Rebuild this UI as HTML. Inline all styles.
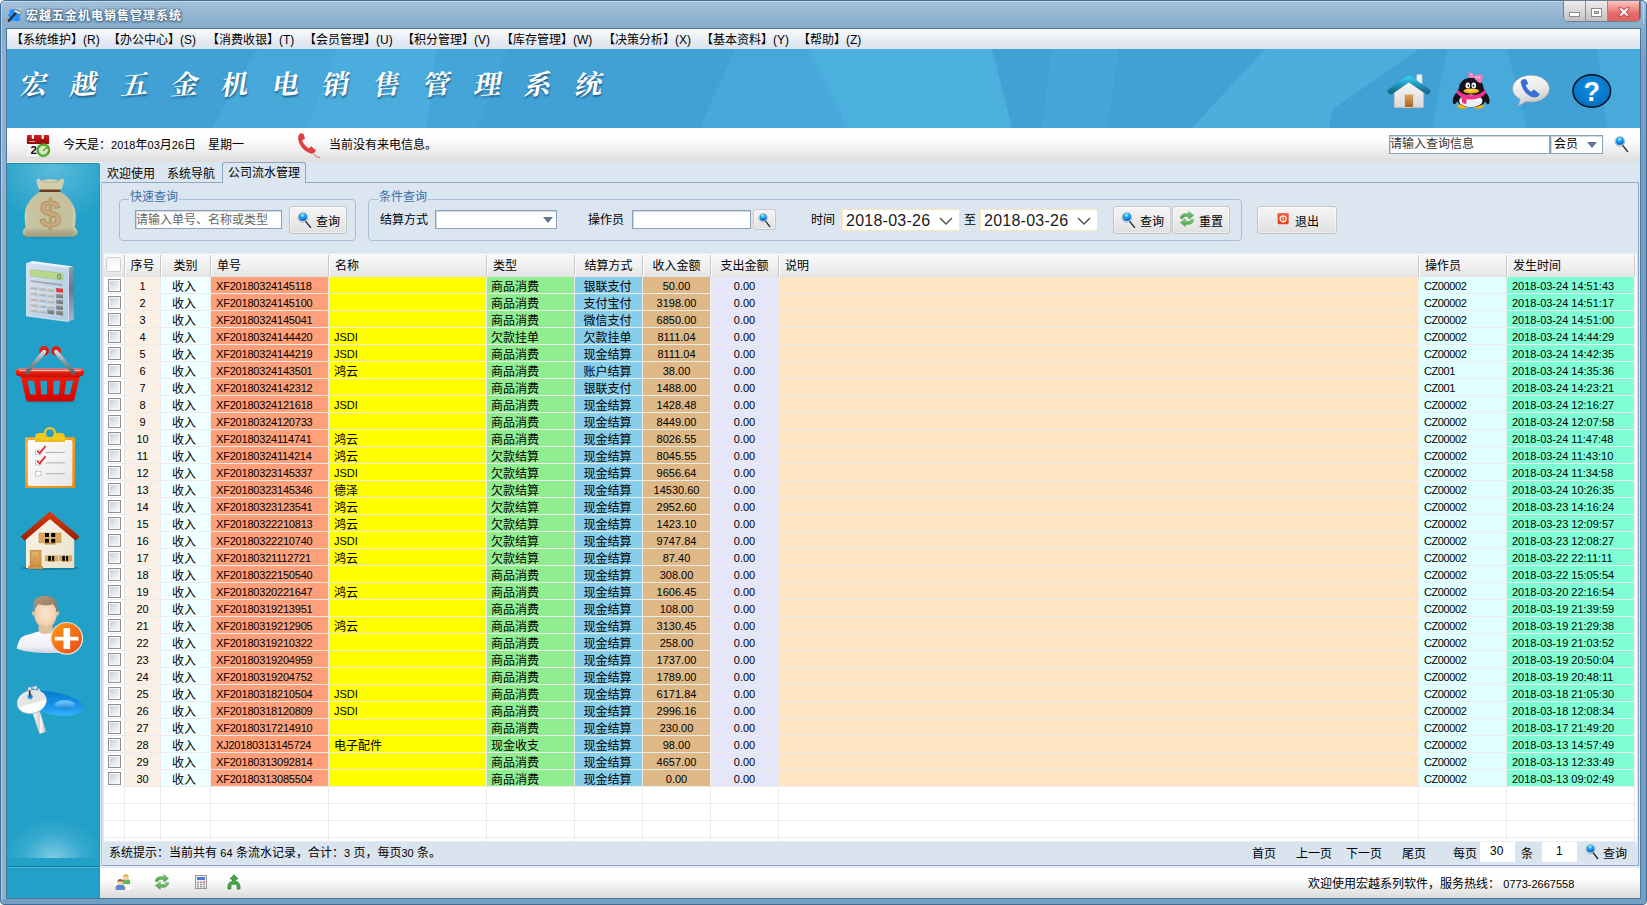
<!DOCTYPE html>
<html lang="zh-CN">
<head>
<meta charset="utf-8">
<title>宏越五金机电销售管理系统</title>
<style>
html,body{margin:0;padding:0}
body{width:1647px;height:905px;overflow:hidden;background:#fff;font-family:"Liberation Sans","Noto Sans CJK SC",sans-serif;font-size:12px;color:#000;line-height:1}
#win{position:absolute;left:0;top:0;width:1647px;height:905px;overflow:hidden}
.a{position:absolute}
i{font-style:normal}
b{font-weight:normal}
/* window frame */
#frame{left:0;top:0;width:1645px;height:903px;border:1px solid #3f6c95;border-radius:5px 5px 4px 4px;background:linear-gradient(#a4c1da 0,#9cbbd6 8px,#8bb0cd 20px,#86adcb 29px,#8cb2cf 60px,#8cb2cf 100%)}
#frame2{left:1px;top:1px;width:1643px;height:901px;border:1px solid rgba(255,255,255,.4);border-radius:4px 4px 3px 3px;box-sizing:border-box}
#clientb{left:6px;top:28px;width:1635px;height:871px;background:#4b7699}
#client{left:7px;top:29px;width:1633px;height:869px;background:#dce6f0;overflow:hidden}
#title{left:26px;top:10px;font-size:12px;font-weight:bold;color:#fff;text-shadow:0 0 3px #3d6180,0 1px 2px #3d6180,1px 0 2px #3d6180;white-space:nowrap;letter-spacing:1px}
/* caption buttons */
#capb{left:1563px;top:0;width:78px;height:22px;border:1px solid #6f7f90;border-radius:0 0 5px 5px;box-sizing:border-box;overflow:hidden;background:#c9c9c9}
#capb span{position:absolute;top:0;height:21px;box-sizing:border-box}
/* menu */
#menu{left:0;top:0;width:1633px;height:20px;background:linear-gradient(#f7f9fc 0,#eef2f7 35%,#e2e8f1 70%,#dbe3ee 100%)}
#menu span{position:absolute;top:5px;white-space:nowrap;font-size:12px}
/* banner */
#banner{left:0;top:20px;width:1633px;height:79px;background:#41a1d5;overflow:hidden}
#btitle span{position:absolute;top:0;width:50px;text-align:center;font-family:"Liberation Serif","Noto Serif CJK SC",serif;font-size:27px;font-weight:700;color:#fff;text-shadow:1px 2px 2px rgba(20,60,100,.7);transform:skewX(-14deg) rotate(-5deg)}
/* toolbar */
#tbar{left:0;top:99px;width:1633px;height:34px;background:linear-gradient(#fff 0,#fdfdfd 30%,#efefef 65%,#dedede 100%)}
.t12{font-size:12px;white-space:nowrap}
/* sidebar */
#side{left:0;top:134px;width:93px;height:735px;background:#22a0c8;overflow:hidden;border-radius:0 3px 0 0;box-shadow:inset -1px 0 0 #1b93ba}
/* tabs */
#tabs{left:93px;top:133px;width:1540px;height:20px}
#panel{left:94px;top:153px;width:1538px;height:684px;border:1px solid #8ea8c0;border-left-color:#bccbdb;box-sizing:border-box;background:#dce6f0}
.fs{border:1px solid #a9bfd6;border-radius:4px;box-sizing:border-box}
.fsl{color:#3a6fa8;background:#dce6f0;padding:0 1px;font-size:12px;white-space:nowrap}
.inp{background:#fff;border:1px solid #8aa1b8;box-sizing:border-box;box-shadow:inset 1px 1px 0 #cfd8e2}
.btn{border:1px solid #c3c5c8;border-radius:3px;box-sizing:border-box;background:linear-gradient(#f4f4f4 0,#ececec 50%,#e0e0e0 100%);box-shadow:inset 0 0 0 1px rgba(255,255,255,.45)}
.btn span{position:absolute;white-space:nowrap;font-size:12px}
/* grid */
#grid{left:103px;top:253px;width:1533px;height:589px;background:#fff;overflow:hidden}
#ghead{left:0;top:0;width:1533px;height:24px;background:linear-gradient(#f9f9f9 0,#f1f1f1 50%,#e4e4e4 100%);border-top:1px solid #e9edf2;box-sizing:border-box}
#ghead span{position:absolute;top:1px;height:22px;border-right:1px solid #c9c9c9;box-shadow:1px 0 0 #fdfdfd;box-sizing:border-box;line-height:23px;font-size:12px;white-space:nowrap}
#gbody{left:1px;top:24px;width:1532px}
.r{position:relative;height:17px;width:1532px}
.r i{position:absolute;top:0;height:17px;box-sizing:border-box;padding-top:1px;border-right:1px solid #ececec;border-bottom:1px solid #ececec;font-size:11px;line-height:17px;white-space:nowrap;overflow:hidden}
.c0{left:0;width:20px;background:#fff}
.c1{left:20px;width:36px;background:#faf0e6;text-align:center}
.c2{left:56px;width:50px;background:#f0ffff;text-align:center;font-size:12px !important;padding-right:3px;padding-top:2px !important}
.c3{left:106px;width:118px;background:#ffa07a;padding-left:5px;letter-spacing:-.2px}
.c4{left:224px;width:158px;background:#ffff00;padding-left:5px;font-size:12px !important;padding-top:2px !important}
.c5{left:382px;width:88px;background:#90ee90;padding-left:4px;font-size:12px !important;padding-top:2px !important}
.c6{left:470px;width:68px;background:#87ceeb;text-align:center;font-size:12px !important;padding-right:2px;padding-top:2px !important}
.c7{left:538px;width:68px;background:#deb887;text-align:center}
.c8{left:606px;width:68px;background:#e6e6fa;text-align:center}
.c9{left:674px;width:640px;background:#ffe4c4}
.c10{left:1314px;width:88px;background:#e0ffff;padding-left:5px;letter-spacing:-.4px}
.c11{left:1402px;width:128px;background:#7fffd4;padding-left:5px}
.ck{position:absolute;left:3px;top:2px;width:11px;height:11px;border:1px solid #8e8f8f;background:linear-gradient(135deg,#c6cad1 0,#e6e8eb 55%,#fbfbfb 100%);box-shadow:inset 0 0 0 1px #f6f6f6}
.c0{border-right:1px solid #e4e4e4 !important;border-bottom:1px solid #ececec !important}
.n{font-size:11px}
.c4.l{font-size:11px !important;padding-top:1px !important}
</style>
</head>
<body>
<div id="win">
<svg class="a" width="0" height="0" style="left:0;top:0"><defs>
<radialGradient id="mg" cx=".45" cy=".25" r=".75"><stop offset="0" stop-color="#b9f6ff"/><stop offset=".35" stop-color="#27b4f4"/><stop offset=".8" stop-color="#0a6fdc"/><stop offset="1" stop-color="#0a5cc0"/></radialGradient>
<linearGradient id="gr" x1="0" y1="0" x2="0" y2="1"><stop offset="0" stop-color="#8fd08a"/><stop offset="1" stop-color="#3f9a3f"/></linearGradient>
<g id="magi"><circle cx="5.900" cy="5.500" r="4.800" fill="#eef2f5" stroke="#8b9aa6" stroke-width=".8"/><circle cx="5.900" cy="5" r="4" fill="url(#mg)"/><path d="M8.900 9.600L13.500 15.400" stroke="#1c262d" stroke-width="1.400" stroke-linecap="round"/></g>
<g id="refi"><path d="M1.200 7.200C1.600 4 4.300 2.300 7.600 2.600L9.700 3V.6L14.600 4.400 9.700 8.200V5.800L7.400 5.500C5.600 5.400 4.300 6.200 3.900 7.700z" fill="url(#gr)" stroke="#4b9a4b" stroke-width=".5"/><path d="M14.800 8.800c-.4 3.200-3.100 4.900-6.400 4.600L6.300 13v2.400L1.400 11.600 6.300 7.800v2.400l2.300.3c1.800.1 3.100-.7 3.500-2.200z" fill="url(#gr)" stroke="#4b9a4b" stroke-width=".5"/></g>
</defs></svg>
<div id="frame" class="a"></div>
<div id="frame2" class="a"></div>
<div class="a" style="left:2px;top:899px;width:1643px;height:5px;background:#729fc3;border-radius:0 0 3px 3px"></div>
<div class="a" style="left:1641px;top:24px;width:5px;height:879px;background:linear-gradient(#86aecd 0,#759fc4 40px,#729fc3 100%);border-radius:0 0 3px 0"></div>
<svg class="a" style="left:7px;top:7px" width="16" height="16" viewBox="0 0 16 16"><path d="M2.500 3.500l2.500-1.500 1.500 1 3.500-.5 3 2 .5 3.500-1 2 1 3-3.500 1.500-2.500-1-3 .5-1.500-3-2-2.500 1.500-2z" fill="#1e90ff"/><path d="M1.800 13.800L8.800 6" stroke="#2b2b2b" stroke-width="2.300" stroke-linecap="round"/><path d="M8 2.200l6.300 3.400-1.300 2.400-6.300-3.400z" fill="#e8e8e8" stroke="#555" stroke-width=".6"/><path d="M12.600 1.200l1.200 1.800M10.500.8l.5 1.500" stroke="#eee" stroke-width=".7"/></svg>
<div id="title" class="a">宏越五金机电销售管理系统</div>
<div id="capb" class="a">
<span style="left:0;width:22px;background:linear-gradient(#ededed 0,#d9d9d9 45%,#bdbdbd 100%);border-right:1px solid #8a8f96"></span>
<span style="left:22px;width:22px;background:linear-gradient(#ededed 0,#d9d9d9 45%,#bdbdbd 100%);border-right:1px solid #8a8f96"></span>
<span style="left:44px;width:32px;background:linear-gradient(#fbc6c2 0,#ee8a87 40%,#e66a67 60%,#df615e 100%);border-right:1px solid #b4403e"></span>
<svg class="a" style="left:0;top:1px" width="77" height="20" viewBox="0 0 77 20"><rect x="5.500" y="10.500" width="10" height="4" fill="#fff" stroke="#8b8b8b"/><rect x="27.500" y="6.500" width="10" height="8" fill="#fff" stroke="#8b8b8b"/><rect x="30.500" y="9.500" width="4" height="2" fill="#c8c8c8" stroke="#8b8b8b"/><path d="M54.300 5.900h3.800l1.900 2.300 1.900-2.300h3.800l-3.800 4.100 3.800 4.100h-3.800l-1.900-2.300-1.900 2.300h-3.800l3.800-4.100z" fill="#fff" stroke="#a8423f" stroke-width=".9"/></svg>
</div>
<div id="clientb" class="a"></div>
<div id="client" class="a">
<div id="menu" class="a">
<span style="left:4px">【系统维护】(R)</span>
<span style="left:101px">【办公中心】(S)</span>
<span style="left:200px">【消费收银】(T)</span>
<span style="left:297px">【会员管理】(U)</span>
<span style="left:395px">【积分管理】(V)</span>
<span style="left:494px">【库存管理】(W)</span>
<span style="left:596px">【决策分析】(X)</span>
<span style="left:694px">【基本资料】(Y)</span>
<span style="left:791px">【帮助】(Z)</span>
</div>
<div id="banner" class="a">
<svg class="a" style="left:0;top:0" width="1633" height="79" viewBox="0 0 1633 79">
<polygon points="250,0 330,0 300,79 205,79" fill="#47a8da"/>
<polygon points="330,0 430,0 420,79 300,79" fill="#4aaddd"/>
<polygon points="430,0 500,0 470,79 420,79" fill="#44a5d8"/>
<polygon points="728,0 800,0 840,79 693,79" fill="#47a9db"/>
<polygon points="800,0 985,0 1005,79 840,79" fill="#4cb0df"/>
<polygon points="1045,0 1112,0 1100,79 1035,79" fill="#45a6d9"/>
<polygon points="1258,0 1412,0 1326,60 1322,79 1185,79" fill="#4baedd"/>
<polygon points="1440,0 1500,0 1520,79 1425,79" fill="#48aadb"/>
<polygon points="1590,0 1633,0 1633,79 1600,79" fill="#48aadb"/>
</svg>
<div id="btitle" class="a" style="left:2px;top:23px">
<span style="left:0">宏</span><span style="left:50px">越</span><span style="left:101px">五</span><span style="left:151px">金</span><span style="left:201px">机</span><span style="left:252px">电</span><span style="left:302px">销</span><span style="left:353px">售</span><span style="left:403px">管</span><span style="left:454px">理</span><span style="left:504px">系</span><span style="left:555px">统</span>
</div>
<svg class="a" style="left:1379px;top:21px" width="48" height="42" viewBox="0 0 48 42">
<defs>
<linearGradient id="hr" x1="0" y1="0" x2="0" y2="1"><stop offset="0" stop-color="#35c6ee"/><stop offset=".45" stop-color="#2398bd"/><stop offset="1" stop-color="#176f8e"/></linearGradient>
<linearGradient id="hb" x1="0" y1="0" x2="0" y2="1"><stop offset="0" stop-color="#fafafa"/><stop offset="1" stop-color="#d9d9d9"/></linearGradient>
<linearGradient id="hd" x1="0" y1="0" x2="0" y2="1"><stop offset="0" stop-color="#dda658"/><stop offset="1" stop-color="#a25e28"/></linearGradient>
</defs>
<rect x="30.800" y="4.600" width="5.200" height="10" rx=".6" fill="#f0f0f0" stroke="#d8cfc8" stroke-width=".5"/>
<path d="M8.200 20.500L22.800 10.500 37.700 20.500V36.700a1 1 0 0 1-1 1H9.200a1 1 0 0 1-1-1z" fill="url(#hb)" stroke="#b9a79c" stroke-width=".6"/>
<rect x="18.400" y="24.200" width="9.100" height="13.300" fill="url(#hd)" stroke="#efe4d4" stroke-width=".7"/>
<path d="M4.800 21.200L22.800 8.600 41.200 21.200" fill="none" stroke="url(#hr)" stroke-width="6.200" stroke-linecap="round" stroke-linejoin="round"/>
</svg>
<svg class="a" style="left:1444px;top:21px" width="40" height="42" viewBox="0 0 40 42">
<defs>
<radialGradient id="qf" cx=".5" cy=".35" r=".7"><stop offset="0" stop-color="#ffd21e"/><stop offset="1" stop-color="#f39a00"/></radialGradient>
</defs>
<ellipse cx="11.700" cy="36.300" rx="5.600" ry="2.500" fill="url(#qf)"/>
<ellipse cx="27.200" cy="36.300" rx="5.600" ry="2.500" fill="url(#qf)"/>
<ellipse cx="4.600" cy="28.600" rx="2.500" ry="5.800" transform="rotate(16 4.600 28.600)" fill="#17131c"/>
<ellipse cx="35.700" cy="28.600" rx="2.500" ry="5.800" transform="rotate(-16 35.700 28.600)" fill="#17131c"/>
<path d="M20.300 7.800C27 7.800 32 12 32.500 17.500 33 20 34.500 23 35 27 35.500 33 30 37.300 20.300 37.300S5 33 5.600 27C6 23 7.500 20 8 17.500 8.600 12 13.600 7.800 20.300 7.800z" fill="#17131c"/>
<ellipse cx="19.800" cy="30.800" rx="11.600" ry="6.200" fill="#fff"/>
<ellipse cx="20" cy="33.400" rx="9.500" ry="3.300" fill="#e3e8f0" opacity=".7"/>
<path d="M6 18.800C10 24 15 25.200 20.300 25.200S30.500 24 34.500 18.800L35 23C31 28 25 29.500 20.300 29.500S9.500 28 5.600 23z" fill="#f0328e"/>
<path d="M10.200 27.200l5.600 1.800-.6 5.200-3.800-1.300z" fill="#ee2f8a"/>
<ellipse cx="16.800" cy="15.500" rx="2.300" ry="3" fill="#fff"/>
<ellipse cx="22.800" cy="15.500" rx="2.300" ry="3" fill="#fff"/>
<ellipse cx="17.300" cy="15.700" rx=".9" ry="1.300" fill="#444"/>
<ellipse cx="22.500" cy="15.700" rx=".9" ry="1.300" fill="#444"/>
<ellipse cx="20.300" cy="21.100" rx="7.900" ry="2.500" fill="url(#qf)"/>
<ellipse cx="20.300" cy="20.300" rx="5.300" ry="1.100" fill="#ffe36a" opacity=".8"/>
<path d="M18.500 2.300c2-.5 4 1.300 4.800 3.900 2-1.500 5.400-2.200 7.300-1.200 1.800 1.100 1.300 5.200-1 8.200-2.500-.9-5-3-6.300-5.300-1.800.4-3.900.1-5.500-1-.8-1.700-.5-4 .7-4.600z" fill="#f879b4"/>
<circle cx="25.500" cy="7.300" r="1" fill="#fcd"/><circle cx="28.300" cy="7.600" r="1.100" fill="#c9d3ee"/><circle cx="20.500" cy="4.400" r=".8" fill="#fcd"/>
</svg>
<svg class="a" style="left:1503px;top:23px" width="44" height="38" viewBox="0 0 44 38">
<defs>
<linearGradient id="pb" x1="0" y1="0" x2=".3" y2="1"><stop offset="0" stop-color="#ffffff"/><stop offset=".6" stop-color="#e9e9e9"/><stop offset="1" stop-color="#c9c9c9"/></linearGradient>
</defs>
<path d="M21 3.300c10.200 0 18.400 6 18.400 13.400S31.200 30.100 21 30.100c-1.800 0-3.600-.2-5.200-.5-2.300 1.700-5 3.300-7.700 4.400 1-2.200 1.700-4.700 1.900-6.800C5.500 24.700 2.600 21 2.600 16.700 2.600 9.300 10.800 3.300 21 3.300z" fill="url(#pb)" stroke="#9aa4ad" stroke-width=".7"/>
<path d="M11.300 9.500c.8-1.200 2.600-2 4.300-1.700l1.800 3.400c-.8.900-1.800 1.300-2.600 1.300 1 3.400 3.200 6.400 6.300 8.200l2.800-2.500 5.200 4.300c-1.200 1.700-3.300 2.500-5.300 2.300-6.300-1.400-11.500-7.300-12.500-15.300z" fill="#3a6fd2" stroke="#3a6fd2" stroke-width="1.300" stroke-linejoin="round"/>
</svg>
<svg class="a" style="left:1563px;top:23px" width="44" height="38" viewBox="0 0 44 38">
<defs>
<radialGradient id="hq" cx=".5" cy=".4" r=".65"><stop offset="0" stop-color="#0d8ee0"/><stop offset=".7" stop-color="#0878cc"/><stop offset="1" stop-color="#0560b0"/></radialGradient>
</defs>
<ellipse cx="21.800" cy="19" rx="18.800" ry="16.200" fill="url(#hq)" stroke="#03101c" stroke-width="1.500"/>
<text x="21.800" y="28.800" text-anchor="middle" font-family="Liberation Sans, sans-serif" font-weight="bold" font-size="27" fill="#fff">?</text>
</svg>

</div>
<div id="tbar" class="a">
<svg class="a" style="left:18px;top:3px" width="28" height="28" viewBox="0 0 28 28">
<defs><linearGradient id="cr" x1="0" y1="0" x2="0" y2="1"><stop offset="0" stop-color="#d32222"/><stop offset=".5" stop-color="#ad1212"/><stop offset="1" stop-color="#8e0a0a"/></linearGradient>
<radialGradient id="cg" cx=".5" cy=".5" r=".5"><stop offset="0" stop-color="#e4f2d6"/><stop offset=".6" stop-color="#cfe6b8"/><stop offset=".68" stop-color="#62ad38"/><stop offset="1" stop-color="#4f9a2b"/></radialGradient></defs>
<rect x="1.600" y="25.300" width="22.800" height="1.300" fill="#c8c8c8" opacity=".8"/>
<rect x="1.900" y="12" width="22.200" height="13.900" fill="#f7f7f7" stroke="#dedede" stroke-width=".5"/>
<rect x="1.900" y="4" width="22.200" height="8.900" rx="1" fill="url(#cr)"/>
<rect x="6.800" y="2.300" width="2.200" height="5.600" rx="1" fill="#f2f6f8"/><rect x="16.600" y="2.300" width="2.200" height="5.600" rx="1" fill="#f2f6f8"/>
<rect x="4" y="10" width="6" height=".8" fill="#f3c9c9"/>
<text x="5.400" y="23.400" font-family="Liberation Sans, sans-serif" font-weight="bold" font-size="11.500" fill="#150505">2</text>
<circle cx="18.300" cy="19.200" r="6.900" fill="url(#cg)"/>
<path d="M18.300 19.500L21.600 16.800" stroke="#4f9a2b" stroke-width="1.200" stroke-linecap="round"/>
</svg>

<span class="a t12" style="left:56px;top:11px">今天是：<b class="n">2018</b>年<b class="n">03</b>月<b class="n">26</b>日　星期一</span>
<svg class="a" style="left:289px;top:3px" width="26" height="28" viewBox="0 0 26 28"><path d="M4.600 2.300l2.800.5 1.700 4.600-3 2.200c1.500 3.800 4 6.400 7 8l2-2.300 4.900 4.200c-1 2.300-3.300 3.600-5.600 3.100C8.500 20.400 3.600 14.800 2.400 9.500 1.700 6.500 2.300 3.600 4.600 2.300z" fill="#e23d3f"/><path d="M17.800 22.500c.6 1.500 1.500 2.800 2.800 3.300 1 .4 2.300.6 3.400.6" fill="none" stroke="#e23d3f" stroke-width=".9"/></svg>

<span class="a t12" style="left:322px;top:11px">当前没有来电信息。</span>
<div class="a inp" style="left:1382px;top:7px;width:161px;height:19px"><span class="a t12" style="left:0;top:2px;color:#333">请输入查询信息</span></div>
<div class="a inp" style="left:1543px;top:7px;width:53px;height:19px"><span class="a t12" style="left:3px;top:2px">会员</span><svg class="a" style="left:36px;top:6px" width="11" height="6"><path d="M0 0h10l-5 6z" fill="#5f7590"/></svg></div>
<svg class="a" style="left:1607px;top:8px" width="16" height="17" viewBox="0 0 16 17"><use href="#magi"/></svg>
</div>
<div class="a" style="left:0;top:133px;width:94px;height:1px;background:#fff"></div>
<div id="side" class="a">
<div class="a" style="left:0;top:0;width:93px;height:1px;background:#1590b8"></div>
<div class="a" style="left:-20px;top:1px;width:133px;height:70px;background:radial-gradient(ellipse 62px 62px at 50% 0,rgba(150,215,238,.5),rgba(34,160,200,0))"></div>
<div class="a" style="left:-10px;top:645px;width:113px;height:50px;background:radial-gradient(ellipse 50px 40px at 50% 100%,rgba(165,222,240,.7),rgba(110,195,225,.28) 60%,rgba(34,160,200,0))"></div>
<div class="a" style="left:0;top:703px;width:93px;height:1px;background:#0d7ea6"></div>
<div class="a" style="left:0;top:704px;width:93px;height:1px;background:#4bb6d8"></div>
<svg class="a" style="left:0;top:0" width="93" height="735" viewBox="0 0 93 735">
<defs>
<linearGradient id="bg1" x1="0" y1="0" x2="1" y2="0"><stop offset="0" stop-color="#e0ddc0"/><stop offset=".1" stop-color="#c8c4a1"/><stop offset=".88" stop-color="#c4c09c"/><stop offset="1" stop-color="#deDbbe"/></linearGradient>
<linearGradient id="bg2" x1="0" y1="0" x2="0" y2="1"><stop offset="0" stop-color="#000" stop-opacity="0"/><stop offset=".8" stop-color="#000" stop-opacity="0"/><stop offset="1" stop-color="#6b6437" stop-opacity=".35"/></linearGradient>
<linearGradient id="cf" x1="0" y1="0" x2="1" y2="1"><stop offset="0" stop-color="#d7e4f2"/><stop offset=".5" stop-color="#c2d6ea"/><stop offset="1" stop-color="#b4cbe3"/></linearGradient>
<linearGradient id="cs" x1="0" y1="0" x2="0" y2="1"><stop offset="0" stop-color="#8a9cb6"/><stop offset=".4" stop-color="#64778f"/><stop offset="1" stop-color="#a9bbd0"/></linearGradient>
<linearGradient id="ck1" x1="0" y1="0" x2="0" y2="1"><stop offset="0" stop-color="#ececec"/><stop offset="1" stop-color="#a3a3a3"/></linearGradient>
<linearGradient id="ck2" x1="0" y1="0" x2="0" y2="1"><stop offset="0" stop-color="#9a9a9a"/><stop offset="1" stop-color="#6e6e6e"/></linearGradient>
<linearGradient id="br" x1="0" y1="0" x2="0" y2="1"><stop offset="0" stop-color="#f31d0c"/><stop offset="1" stop-color="#cf0500"/></linearGradient>
<linearGradient id="brim" x1="0" y1="0" x2="0" y2="1"><stop offset="0" stop-color="#ff8a7a"/><stop offset=".3" stop-color="#f2230f"/><stop offset="1" stop-color="#c91208"/></linearGradient>
<linearGradient id="bh" x1="0" y1="0" x2="0" y2="1"><stop offset="0" stop-color="#d3dce2"/><stop offset=".5" stop-color="#8d989f"/><stop offset="1" stop-color="#59666e"/></linearGradient>
<linearGradient id="cb" x1="0" y1="0" x2="1" y2="1"><stop offset="0" stop-color="#fbb02d"/><stop offset="1" stop-color="#e38d10"/></linearGradient>
<linearGradient id="cp" x1="0" y1="0" x2="1" y2="1"><stop offset="0" stop-color="#ffffff"/><stop offset="1" stop-color="#e6e6e6"/></linearGradient>
<linearGradient id="hw" x1="0" y1="0" x2="1" y2="1"><stop offset="0" stop-color="#fbf7ec"/><stop offset="1" stop-color="#e9e0c9"/></linearGradient>
<linearGradient id="hrf" x1="0" y1="0" x2="0" y2="1"><stop offset="0" stop-color="#d43a10"/><stop offset="1" stop-color="#9c2004"/></linearGradient>
<linearGradient id="hdr" x1="0" y1="0" x2="0" y2="1"><stop offset="0" stop-color="#e6b672"/><stop offset="1" stop-color="#cf9244"/></linearGradient>
<radialGradient id="uf" cx=".5" cy=".45" r=".6"><stop offset="0" stop-color="#fbe5cd"/><stop offset=".7" stop-color="#f3d3b1"/><stop offset="1" stop-color="#d9b08a"/></radialGradient>
<linearGradient id="uh" x1="0" y1="0" x2="1" y2="1"><stop offset="0" stop-color="#b59a7c"/><stop offset="1" stop-color="#8d7156"/></linearGradient>
<linearGradient id="us" x1="0" y1="0" x2="0" y2="1"><stop offset="0" stop-color="#fafaff"/><stop offset=".7" stop-color="#f0f0f7"/><stop offset="1" stop-color="#cfcfdd"/></linearGradient>
<linearGradient id="up" x1="0" y1="0" x2="1" y2="1"><stop offset="0" stop-color="#ff9d14"/><stop offset="1" stop-color="#e5481c"/></linearGradient>
<linearGradient id="kt" x1="0" y1="0" x2="0" y2="1"><stop offset="0" stop-color="#067bd2"/><stop offset=".6" stop-color="#1595ea"/><stop offset="1" stop-color="#37b3fb"/></linearGradient>
<linearGradient id="kt2" x1="0" y1="0" x2="0" y2="1"><stop offset="0" stop-color="#7ccdfd"/><stop offset="1" stop-color="#1583dc"/></linearGradient>
<linearGradient id="kk" x1="0" y1="0" x2="1" y2="0"><stop offset="0" stop-color="#fdfdfd"/><stop offset=".5" stop-color="#d2d2d2"/><stop offset=".6" stop-color="#fafafa"/><stop offset="1" stop-color="#bcbcbc"/></linearGradient>
</defs>
<g>
<ellipse cx="43" cy="74" rx="27" ry="1.600" fill="#157a9b" opacity=".45"/>
<path d="M30.300 16.200C31.500 15.500 33 17 34.500 18.300 38 16.200 48.500 16.200 52 18.300 53.500 17 55 15.500 56.200 16.200 57 18.500 55.800 22.500 53.500 26.800L32.800 26.800C30.500 22.500 29.500 18.500 30.300 16.200z" fill="#d3cea9" stroke="#e4e0c6" stroke-width=".6"/>
<path d="M34.500 18.300C38 19.800 48.500 19.800 52 18.300" fill="none" stroke="#b3ad84" stroke-width=".7"/>
<path d="M33 28.800C27 32 18.500 40 17.800 51 17.500 57 18.200 61 18.800 64 17.500 65.500 16 67.500 15.500 69 16 71.500 17.500 73 20 73.800L66.300 73.800C68.800 73 70.300 71.500 70.800 69 70.300 67.500 69 65.500 67.700 64 68.300 61 68.900 57 68.600 51 67.900 40 59.500 32 53.400 28.800z" fill="url(#bg1)"/>
<path d="M33 28.800C27 32 18.500 40 17.800 51 17.500 57 18.200 61 18.800 64 17.500 65.500 16 67.500 15.500 69 16 71.500 17.500 73 20 73.800L66.300 73.800C68.800 73 70.300 71.500 70.800 69 70.300 67.500 69 65.500 67.700 64 68.300 61 68.900 57 68.600 51 67.900 40 59.500 32 53.400 28.800z" fill="url(#bg2)"/>
<rect x="32.300" y="26.500" width="21.400" height="2.500" rx="1.200" fill="#6c3a1f"/>
<text x="43.300" y="64.300" text-anchor="middle" font-family="Liberation Sans, sans-serif" font-weight="bold" font-size="39" fill="#c9a97b" stroke="#a98a5e" stroke-width=".7">$</text>
</g>
<g>
<polygon points="19.5,100.3 25.6,98.0 66.3,103.4 61.5,105.1" fill="#eef3f9"/>
<polygon points="61.5,105.1 66.3,103.4 66.8,156.4 61.5,158.6" fill="url(#cs)"/>
<polygon points="19.5,100.3 61.5,105.1 61.5,158.6 19.5,152.9" fill="url(#cf)" stroke="#dfe9f4" stroke-width=".8" stroke-linejoin="round"/>
<polygon points="23.4,106.5 56.1,110.2 56.1,117.2 23.4,113.1" fill="#b9d68f" stroke="#9fbb7c" stroke-width=".5"/>
<text x="52" y="116.2" text-anchor="middle" font-family="Liberation Sans, sans-serif" font-size="7.500" fill="#4b5a3a" transform="skewY(6.500)" style="transform-origin:52px 116.2px">0</text>
<polygon points="23.4,117.0 55.3,121.0 55.3,123.3 23.4,118.8" fill="#a4a9ae"/>
<polygon points="23.6,121.9 30.4,122.7 30.4,126.8 23.6,126.0" fill="url(#ck1)"/>
<polygon points="23.6,127.7 30.4,128.5 30.4,132.6 23.6,131.8" fill="url(#ck1)"/>
<polygon points="23.6,133.4 30.4,134.2 30.4,138.3 23.6,137.5" fill="url(#ck1)"/>
<polygon points="23.6,139.2 30.4,140.0 30.4,144.1 23.6,143.3" fill="url(#ck1)"/>
<polygon points="23.6,144.5 30.4,145.3 30.4,149.4 23.6,148.6" fill="url(#ck1)"/>
<polygon points="32.0,122.9 38.8,123.7 38.8,127.8 32.0,127.0" fill="url(#ck1)"/>
<polygon points="32.0,128.7 38.8,129.5 38.8,133.6 32.0,132.8" fill="url(#ck1)"/>
<polygon points="32.0,134.4 38.8,135.2 38.8,139.3 32.0,138.5" fill="url(#ck1)"/>
<polygon points="32.0,140.2 38.8,141.0 38.8,145.1 32.0,144.3" fill="url(#ck1)"/>
<polygon points="32.0,145.5 38.8,146.3 38.8,150.4 32.0,149.6" fill="url(#ck1)"/>
<polygon points="40.3,123.9 47.1,124.7 47.1,128.8 40.3,128.0" fill="url(#ck1)"/>
<polygon points="40.3,129.7 47.1,130.5 47.1,134.6 40.3,133.8" fill="url(#ck1)"/>
<polygon points="40.3,135.4 47.1,136.2 47.1,140.3 40.3,139.5" fill="url(#ck1)"/>
<polygon points="40.3,141.2 47.1,142.0 47.1,146.1 40.3,145.3" fill="url(#ck1)"/>
<polygon points="40.3,146.5 47.1,147.3 47.1,151.4 40.3,150.6" fill="url(#ck2)"/>
<polygon points="49.2,124.9 56.0,125.7 56.0,129.8 49.2,129.0" fill="#dc3a3a"/>
<polygon points="49.2,130.7 56.0,131.5 56.0,135.6 49.2,134.8" fill="url(#ck2)"/>
<polygon points="49.2,136.4 56.0,137.2 56.0,141.3 49.2,140.5" fill="url(#ck2)"/>
<polygon points="49.2,142.2 56.0,143.0 56.0,147.1 49.2,146.3" fill="url(#ck2)"/>
<polygon points="49.2,147.5 56.0,148.3 56.0,152.4 49.2,151.6" fill="url(#ck2)"/>
</g>
<g>
<ellipse cx="43" cy="238.9" rx="26" ry="1.500" fill="#157a9b" opacity=".4"/>
<path d="M13.700 212.5L72.900 212.5 67.600 235.5C67.200 237.3 66 238.6 64.300 238.6L22 238.6C20.300 238.6 19.100 237.3 18.700 235.5z" fill="url(#br)"/>
<rect x="8.800" y="205.6" width="68.200" height="7.600" rx="3.700" fill="url(#brim)"/>
<rect x="12" y="206.9" width="62" height="1.300" rx=".6" fill="#ffc9bf" opacity=".85"/>
<rect x="13.500" y="213.1" width="59.600" height="1.200" fill="#b80f06" opacity=".7"/>
<polygon points="21.2,218.4 26.5,218.4 28.3,230.8 23.9,230.8" fill="#22a0c8" stroke="#22a0c8" stroke-width="1.400" stroke-linejoin="round"/>
<polygon points="34.0,218.4 39.3,218.4 39.3,230.8 34.9,230.8" fill="#22a0c8" stroke="#22a0c8" stroke-width="1.400" stroke-linejoin="round"/>
<polygon points="47.3,218.4 52.6,218.4 51.3,230.8 46.9,230.8" fill="#22a0c8" stroke="#22a0c8" stroke-width="1.400" stroke-linejoin="round"/>
<polygon points="60.1,218.4 65.4,218.4 62.3,230.8 57.9,230.8" fill="#22a0c8" stroke="#22a0c8" stroke-width="1.400" stroke-linejoin="round"/>
<circle cx="37.100" cy="187.9" r="4.900" fill="#ee1c0e"/><circle cx="49.200" cy="187.9" r="4.900" fill="#ee1c0e"/>
<circle cx="37.600" cy="188.5" r="2.600" fill="#8a0d05"/><circle cx="48.700" cy="188.5" r="2.600" fill="#8a0d05"/>
<path d="M19.900 209.4L37.300 188.6" stroke="url(#bh)" stroke-width="4.200" stroke-linecap="round"/>
<path d="M66.300 209.4L48.900 188.6" stroke="url(#bh)" stroke-width="4.200" stroke-linecap="round"/>
</g>
<g>
<rect x="18.100" y="274.2" width="50" height="50.900" rx="1.200" fill="url(#cb)"/>
<rect x="20.800" y="276.9" width="44.600" height="46" rx="2" fill="url(#cp)"/>
<path d="M28.100 278.7V274.0a4 4 0 0 1 4-4H36.800a6.100 6.100 0 0 1 12.200 0H53.900a4 4 0 0 1 4 4V278.7z" fill="#f6c71d"/>
<path d="M28.100 277.5h29.800v1.200h-29.800z" fill="#e6b010"/>
<circle cx="42.900" cy="270.2" r="3.900" fill="#22a0c8"/>
<rect x="28.400" y="287.0" width="5.600" height="4.600" fill="#fff" stroke="#b5b5b5" stroke-width=".7"/>
<rect x="38.900" y="288.9" width="19" height="1.100" fill="#b3b3b3"/>
<path d="M30.300 287.8L32.700 290.2 38.600 283.0" fill="none" stroke="#e3242b" stroke-width="1.700"/>
<rect x="28.400" y="297.4" width="5.600" height="4.600" fill="#fff" stroke="#b5b5b5" stroke-width=".7"/>
<rect x="38.900" y="299.3" width="19" height="1.100" fill="#b3b3b3"/>
<path d="M30.300 298.2L32.700 300.6 38.600 293.4" fill="none" stroke="#e3242b" stroke-width="1.700"/>
<rect x="28.400" y="308.3" width="5.600" height="4.600" fill="#fff" stroke="#b5b5b5" stroke-width=".7"/>
<rect x="38.900" y="310.2" width="19" height="1.100" fill="#b3b3b3"/>
</g>
<g>
<ellipse cx="43" cy="405.0" rx="29" ry="2" fill="#0f5f80" opacity=".55"/>
<polygon points="42.9,355.5 19.0,374.5 19.0,405.0 67.2,405.0 67.2,374.5" fill="url(#hw)"/>
<path d="M15.600 375.6L42.900 352.2 70.600 375.6" fill="none" stroke="url(#hrf)" stroke-width="5.800" stroke-linejoin="miter" stroke-linecap="butt"/>
<rect x="32" y="370.0" width="22" height="9.800" fill="#dca95f" stroke="#c08a40" stroke-width=".5"/>
<rect x="38" y="370.0" width="10.200" height="9.800" fill="#e8bd7c"/>
<rect x="38.0" y="370.0" width="4" height="4" fill="#050505"/>
<rect x="44.2" y="370.0" width="4" height="4" fill="#050505"/>
<rect x="38.0" y="375.8" width="4" height="4" fill="#050505"/>
<rect x="44.2" y="375.8" width="4" height="4" fill="#050505"/>
<rect x="37.400" y="379.8" width="11.200" height="1.700" fill="#c98f45"/>
<rect x="21" y="403.0" width="15" height="2.900" fill="#d39a4f"/>
<rect x="23.200" y="387.3" width="10.800" height="15.900" fill="url(#hdr)" stroke="#b87c33" stroke-width=".7"/>
<rect x="24.800" y="388.8" width="7.600" height="6" fill="none" stroke="#c98c40" stroke-width=".5"/><rect x="24.800" y="396.0" width="7.600" height="6" fill="none" stroke="#c98c40" stroke-width=".5"/>
<rect x="38.2" y="392.9" width="12.700" height="5" fill="#dca95f" stroke="#c08a40" stroke-width=".4"/>
<rect x="41.2" y="392.9" width="2.700" height="5" fill="#050505"/><rect x="45.1" y="392.9" width="2" height="5" fill="#050505"/>
<rect x="41.0" y="397.9" width="7" height=".9" fill="#c98f45"/>
<rect x="52.2" y="392.9" width="12.700" height="5" fill="#dca95f" stroke="#c08a40" stroke-width=".4"/>
<rect x="55.2" y="392.9" width="2.700" height="5" fill="#050505"/><rect x="59.1" y="392.9" width="2" height="5" fill="#050505"/>
<rect x="55.0" y="397.9" width="7" height=".9" fill="#c98f45"/>
</g>
<g>
<path d="M9.700 485.5C11 479.0 13 474.0 18 472.5L31.500 468.6 45.500 468.6C51 470.0 55 472.0 58 476.0L58 489.5C40 490.8 22 490.3 9.700 485.5z" fill="url(#us)"/>
<path d="M31.800 461.0L45.500 461.0 45.800 468.8C42 471.8 35 471.8 31.500 468.8z" fill="#dcc2a4"/>
<ellipse cx="38.500" cy="451.3" rx="11.300" ry="13.600" fill="url(#uf)"/>
<ellipse cx="26.600" cy="450.0" rx="1.500" ry="2.600" fill="#ecc7a2"/><ellipse cx="50.400" cy="450.0" rx="1.500" ry="2.600" fill="#ecc7a2"/>
<path d="M26.200 449.0C25 438.0 29 432.8 37.500 432.8 46.500 432.8 52 438.0 50.800 449.0L49.300 449.0C49.500 445.0 48.800 442.5 47 440.5 42 443.3 34 442.6 30 440.5 28.300 442.5 27.500 445.0 27.700 449.0z" fill="url(#uh)"/>
<circle cx="59.700" cy="475.3" r="16.400" fill="#e8e4e0"/>
<circle cx="59.700" cy="475.3" r="15.200" fill="url(#up)"/>
<rect x="56.500" y="465.1" width="6.600" height="20.800" fill="#fff"/><rect x="47.800" y="473.8" width="23.600" height="3.700" fill="#fff"/>
</g>
<g>
<path d="M33.500 528.0C42 527.5 60 531.0 70 536.5 75 539.0 77.500 542.5 76 546.5 73.500 551.0 64 553.5 55 553.0 46 552.5 38 550.5 33.500 547.5 31 541.0 31 533.0 33.500 528.0z" fill="url(#kt)"/>
<ellipse cx="57.900" cy="542.0" rx="10.600" ry="4.700" fill="url(#kt2)"/>
<path d="M25.800 550.5L32.800 548.5 39 568.8 32.500 571.0z" fill="url(#kk)" stroke="#a9a9a9" stroke-width=".4"/>
<ellipse cx="24.800" cy="538.8" rx="14.800" ry="11.500" transform="rotate(-16 24.800 538.8)" fill="#fdfdfd" stroke="#c9c9c9" stroke-width=".6"/>
<path d="M10.600 542.0C12 533.0 19 527.8 26 527.4 32 527.7 37 531.0 38.800 534.5L39.200 536.3 12 544.2z" fill="#e4e4e4"/>
<circle cx="23.200" cy="533.6" r="2.900" fill="#1487d4" stroke="#d9d9d9" stroke-width="1"/>
<path d="M23 532.5L22.500 527.0" stroke="#3c3c3c" stroke-width="1.800"/>
<circle cx="22.600" cy="525.7" r="1.700" fill="#e3e3e3"/><circle cx="28.300" cy="524.5" r="1.700" fill="#e3e3e3"/><circle cx="31.800" cy="526.7" r="1.300" fill="#d5d5d5"/><circle cx="25.500" cy="524.7" r="1" fill="#cfcfcf"/>
</g>
</svg>

</div>
<div id="tabs" class="a">
<span class="a t12" style="left:7px;top:6px">欢迎使用</span>
<span class="a t12" style="left:67px;top:6px">系统导航</span>
</div>
<div id="panel" class="a"></div>
<div class="a" style="left:215px;top:133px;width:84px;height:21px;border:1px solid #8ea8c0;border-bottom:none;border-radius:3px 3px 0 0;box-sizing:border-box;background:#dce6f0"><span class="a t12" style="left:5px;top:4px">公司流水管理</span></div>
<!-- 快速查询 -->
<div class="a fs" style="left:112px;top:170px;width:237px;height:42px"></div>
<span class="a fsl" style="left:122px;top:162px">快速查询</span>
<div class="a inp" style="left:128px;top:181px;width:147px;height:19px"><span class="a t12" style="left:0;top:3px;color:#666">请输入单号、名称或类型</span></div>
<div class="a btn" style="left:282px;top:177px;width:58px;height:28px"><svg class="a" style="left:7px;top:5px" width="16" height="17" viewBox="0 0 16 17"><use href="#magi"/></svg><span style="left:26px;top:9px">查询</span></div>
<!-- 条件查询 -->
<div class="a fs" style="left:361px;top:170px;width:874px;height:42px"></div>
<span class="a fsl" style="left:371px;top:162px">条件查询</span>
<span class="a t12" style="left:373px;top:185px">结算方式</span>
<div class="a inp" style="left:428px;top:181px;width:122px;height:19px"><svg class="a" style="left:107px;top:6px" width="11" height="6"><path d="M0 0h10l-5 6z" fill="#5f7590"/></svg></div>
<span class="a t12" style="left:581px;top:185px">操作员</span>
<div class="a inp" style="left:625px;top:181px;width:119px;height:19px"></div>
<div class="a btn" style="left:746px;top:180px;width:23px;height:21px"><svg class="a" style="left:4px;top:3px" width="14" height="15" viewBox="0 0 16 17"><use href="#magi"/></svg></div>
<span class="a t12" style="left:804px;top:185px">时间</span>
<div class="a" style="left:835px;top:180px;width:118px;height:22px;background:#fff;border:1px solid #fae7b4;box-sizing:border-box"><span class="a" style="left:3px;top:3px;font-size:16px;white-space:nowrap;color:#1a1a1a;letter-spacing:.25px">2018-03-26</span><svg class="a" style="left:96px;top:7px" width="14" height="9"><path d="M1 1l6 6 6-6" fill="none" stroke="#555" stroke-width="1.500"/></svg></div>
<span class="a t12" style="left:957px;top:185px">至</span>
<div class="a" style="left:973px;top:180px;width:118px;height:22px;background:#fff;border:1px solid #fae7b4;box-sizing:border-box"><span class="a" style="left:3px;top:3px;font-size:16px;white-space:nowrap;color:#1a1a1a;letter-spacing:.25px">2018-03-26</span><svg class="a" style="left:96px;top:7px" width="14" height="9"><path d="M1 1l6 6 6-6" fill="none" stroke="#555" stroke-width="1.500"/></svg></div>
<div class="a btn" style="left:1106px;top:177px;width:58px;height:28px"><svg class="a" style="left:7px;top:5px" width="16" height="17" viewBox="0 0 16 17"><use href="#magi"/></svg><span style="left:26px;top:9px">查询</span></div>
<div class="a btn" style="left:1165px;top:177px;width:58px;height:28px"><svg class="a" style="left:6px;top:4px" width="16" height="16" viewBox="0 0 16 16"><use href="#refi"/></svg><span style="left:26px;top:9px">重置</span></div>
<div class="a btn" style="left:1250px;top:177px;width:80px;height:28px"><svg class="a" style="left:17px;top:4px" width="16" height="16" viewBox="0 0 16 16"><rect x="2.600" y="2.300" width="11" height="11" rx="1.200" fill="#e8421f"/><rect x="2.600" y="2.300" width="11" height="5" rx="1.200" fill="#f26a4a" opacity=".6"/><circle cx="8.100" cy="7.800" r="3" fill="none" stroke="#fff" stroke-width="1.200"/><rect x="7.600" y="5.800" width="1" height="3.600" fill="#fff"/></svg><span style="left:37px;top:9px">退出</span></div>
<!-- grid -->
<div id="grid" class="a" style="left:97px;top:224px">
<div id="ghead" class="a">
<span style="left:0;width:21px"><b class="a" style="left:2px;top:2px;width:15px;height:15px;border:1px solid #d0d0d0;border-radius:3px;box-sizing:border-box;background:linear-gradient(#f4f4f4,#fff)"></b></span>
<span style="left:21px;width:36px;text-align:center">序号</span>
<span style="left:57px;width:50px;text-align:center">类别</span>
<span style="left:107px;width:118px;padding-left:6px">单号</span>
<span style="left:225px;width:158px;padding-left:6px">名称</span>
<span style="left:383px;width:88px;padding-left:6px">类型</span>
<span style="left:471px;width:68px;text-align:center">结算方式</span>
<span style="left:539px;width:68px;text-align:center">收入金额</span>
<span style="left:607px;width:68px;text-align:center">支出金额</span>
<span style="left:675px;width:640px;padding-left:6px">说明</span>
<span style="left:1315px;width:88px;padding-left:6px">操作员</span>
<span style="left:1403px;width:128px;padding-left:6px">发生时间</span>
</div>
<div id="gbody" class="a">
<div class="r"><i class="c0"><b class="ck"></b></i><i class="c1">1</i><i class="c2">收入</i><i class="c3">XF20180324145118</i><i class="c4"></i><i class="c5">商品消费</i><i class="c6">银联支付</i><i class="c7">50.00</i><i class="c8">0.00</i><i class="c9"></i><i class="c10">CZ00002</i><i class="c11">2018-03-24 14:51:43</i></div>
<div class="r"><i class="c0"><b class="ck"></b></i><i class="c1">2</i><i class="c2">收入</i><i class="c3">XF20180324145100</i><i class="c4"></i><i class="c5">商品消费</i><i class="c6">支付宝付</i><i class="c7">3198.00</i><i class="c8">0.00</i><i class="c9"></i><i class="c10">CZ00002</i><i class="c11">2018-03-24 14:51:17</i></div>
<div class="r"><i class="c0"><b class="ck"></b></i><i class="c1">3</i><i class="c2">收入</i><i class="c3">XF20180324145041</i><i class="c4"></i><i class="c5">商品消费</i><i class="c6">微信支付</i><i class="c7">6850.00</i><i class="c8">0.00</i><i class="c9"></i><i class="c10">CZ00002</i><i class="c11">2018-03-24 14:51:00</i></div>
<div class="r"><i class="c0"><b class="ck"></b></i><i class="c1">4</i><i class="c2">收入</i><i class="c3">XF20180324144420</i><i class="c4 l">JSDI</i><i class="c5">欠款挂单</i><i class="c6">欠款挂单</i><i class="c7">8111.04</i><i class="c8">0.00</i><i class="c9"></i><i class="c10">CZ00002</i><i class="c11">2018-03-24 14:44:29</i></div>
<div class="r"><i class="c0"><b class="ck"></b></i><i class="c1">5</i><i class="c2">收入</i><i class="c3">XF20180324144219</i><i class="c4 l">JSDI</i><i class="c5">商品消费</i><i class="c6">现金结算</i><i class="c7">8111.04</i><i class="c8">0.00</i><i class="c9"></i><i class="c10">CZ00002</i><i class="c11">2018-03-24 14:42:35</i></div>
<div class="r"><i class="c0"><b class="ck"></b></i><i class="c1">6</i><i class="c2">收入</i><i class="c3">XF20180324143501</i><i class="c4">鸿云</i><i class="c5">商品消费</i><i class="c6">账户结算</i><i class="c7">38.00</i><i class="c8">0.00</i><i class="c9"></i><i class="c10">CZ001</i><i class="c11">2018-03-24 14:35:36</i></div>
<div class="r"><i class="c0"><b class="ck"></b></i><i class="c1">7</i><i class="c2">收入</i><i class="c3">XF20180324142312</i><i class="c4"></i><i class="c5">商品消费</i><i class="c6">银联支付</i><i class="c7">1488.00</i><i class="c8">0.00</i><i class="c9"></i><i class="c10">CZ001</i><i class="c11">2018-03-24 14:23:21</i></div>
<div class="r"><i class="c0"><b class="ck"></b></i><i class="c1">8</i><i class="c2">收入</i><i class="c3">XF20180324121618</i><i class="c4 l">JSDI</i><i class="c5">商品消费</i><i class="c6">现金结算</i><i class="c7">1428.48</i><i class="c8">0.00</i><i class="c9"></i><i class="c10">CZ00002</i><i class="c11">2018-03-24 12:16:27</i></div>
<div class="r"><i class="c0"><b class="ck"></b></i><i class="c1">9</i><i class="c2">收入</i><i class="c3">XF20180324120733</i><i class="c4"></i><i class="c5">商品消费</i><i class="c6">现金结算</i><i class="c7">8449.00</i><i class="c8">0.00</i><i class="c9"></i><i class="c10">CZ00002</i><i class="c11">2018-03-24 12:07:58</i></div>
<div class="r"><i class="c0"><b class="ck"></b></i><i class="c1">10</i><i class="c2">收入</i><i class="c3">XF20180324114741</i><i class="c4">鸿云</i><i class="c5">商品消费</i><i class="c6">现金结算</i><i class="c7">8026.55</i><i class="c8">0.00</i><i class="c9"></i><i class="c10">CZ00002</i><i class="c11">2018-03-24 11:47:48</i></div>
<div class="r"><i class="c0"><b class="ck"></b></i><i class="c1">11</i><i class="c2">收入</i><i class="c3">XF20180324114214</i><i class="c4">鸿云</i><i class="c5">欠款结算</i><i class="c6">现金结算</i><i class="c7">8045.55</i><i class="c8">0.00</i><i class="c9"></i><i class="c10">CZ00002</i><i class="c11">2018-03-24 11:43:10</i></div>
<div class="r"><i class="c0"><b class="ck"></b></i><i class="c1">12</i><i class="c2">收入</i><i class="c3">XF20180323145337</i><i class="c4 l">JSDI</i><i class="c5">欠款结算</i><i class="c6">现金结算</i><i class="c7">9656.64</i><i class="c8">0.00</i><i class="c9"></i><i class="c10">CZ00002</i><i class="c11">2018-03-24 11:34:58</i></div>
<div class="r"><i class="c0"><b class="ck"></b></i><i class="c1">13</i><i class="c2">收入</i><i class="c3">XF20180323145346</i><i class="c4">德泽</i><i class="c5">欠款结算</i><i class="c6">现金结算</i><i class="c7">14530.60</i><i class="c8">0.00</i><i class="c9"></i><i class="c10">CZ00002</i><i class="c11">2018-03-24 10:26:35</i></div>
<div class="r"><i class="c0"><b class="ck"></b></i><i class="c1">14</i><i class="c2">收入</i><i class="c3">XF20180323123541</i><i class="c4">鸿云</i><i class="c5">欠款结算</i><i class="c6">现金结算</i><i class="c7">2952.60</i><i class="c8">0.00</i><i class="c9"></i><i class="c10">CZ00002</i><i class="c11">2018-03-23 14:16:24</i></div>
<div class="r"><i class="c0"><b class="ck"></b></i><i class="c1">15</i><i class="c2">收入</i><i class="c3">XF20180322210813</i><i class="c4">鸿云</i><i class="c5">欠款结算</i><i class="c6">现金结算</i><i class="c7">1423.10</i><i class="c8">0.00</i><i class="c9"></i><i class="c10">CZ00002</i><i class="c11">2018-03-23 12:09:57</i></div>
<div class="r"><i class="c0"><b class="ck"></b></i><i class="c1">16</i><i class="c2">收入</i><i class="c3">XF20180322210740</i><i class="c4 l">JSDI</i><i class="c5">欠款结算</i><i class="c6">现金结算</i><i class="c7">9747.84</i><i class="c8">0.00</i><i class="c9"></i><i class="c10">CZ00002</i><i class="c11">2018-03-23 12:08:27</i></div>
<div class="r"><i class="c0"><b class="ck"></b></i><i class="c1">17</i><i class="c2">收入</i><i class="c3">XF20180321112721</i><i class="c4">鸿云</i><i class="c5">欠款结算</i><i class="c6">现金结算</i><i class="c7">87.40</i><i class="c8">0.00</i><i class="c9"></i><i class="c10">CZ00002</i><i class="c11">2018-03-22 22:11:11</i></div>
<div class="r"><i class="c0"><b class="ck"></b></i><i class="c1">18</i><i class="c2">收入</i><i class="c3">XF20180322150540</i><i class="c4"></i><i class="c5">商品消费</i><i class="c6">现金结算</i><i class="c7">308.00</i><i class="c8">0.00</i><i class="c9"></i><i class="c10">CZ00002</i><i class="c11">2018-03-22 15:05:54</i></div>
<div class="r"><i class="c0"><b class="ck"></b></i><i class="c1">19</i><i class="c2">收入</i><i class="c3">XF20180320221647</i><i class="c4">鸿云</i><i class="c5">商品消费</i><i class="c6">现金结算</i><i class="c7">1606.45</i><i class="c8">0.00</i><i class="c9"></i><i class="c10">CZ00002</i><i class="c11">2018-03-20 22:16:54</i></div>
<div class="r"><i class="c0"><b class="ck"></b></i><i class="c1">20</i><i class="c2">收入</i><i class="c3">XF20180319213951</i><i class="c4"></i><i class="c5">商品消费</i><i class="c6">现金结算</i><i class="c7">108.00</i><i class="c8">0.00</i><i class="c9"></i><i class="c10">CZ00002</i><i class="c11">2018-03-19 21:39:59</i></div>
<div class="r"><i class="c0"><b class="ck"></b></i><i class="c1">21</i><i class="c2">收入</i><i class="c3">XF20180319212905</i><i class="c4">鸿云</i><i class="c5">商品消费</i><i class="c6">现金结算</i><i class="c7">3130.45</i><i class="c8">0.00</i><i class="c9"></i><i class="c10">CZ00002</i><i class="c11">2018-03-19 21:29:38</i></div>
<div class="r"><i class="c0"><b class="ck"></b></i><i class="c1">22</i><i class="c2">收入</i><i class="c3">XF20180319210322</i><i class="c4"></i><i class="c5">商品消费</i><i class="c6">现金结算</i><i class="c7">258.00</i><i class="c8">0.00</i><i class="c9"></i><i class="c10">CZ00002</i><i class="c11">2018-03-19 21:03:52</i></div>
<div class="r"><i class="c0"><b class="ck"></b></i><i class="c1">23</i><i class="c2">收入</i><i class="c3">XF20180319204959</i><i class="c4"></i><i class="c5">商品消费</i><i class="c6">现金结算</i><i class="c7">1737.00</i><i class="c8">0.00</i><i class="c9"></i><i class="c10">CZ00002</i><i class="c11">2018-03-19 20:50:04</i></div>
<div class="r"><i class="c0"><b class="ck"></b></i><i class="c1">24</i><i class="c2">收入</i><i class="c3">XF20180319204752</i><i class="c4"></i><i class="c5">商品消费</i><i class="c6">现金结算</i><i class="c7">1789.00</i><i class="c8">0.00</i><i class="c9"></i><i class="c10">CZ00002</i><i class="c11">2018-03-19 20:48:11</i></div>
<div class="r"><i class="c0"><b class="ck"></b></i><i class="c1">25</i><i class="c2">收入</i><i class="c3">XF20180318210504</i><i class="c4 l">JSDI</i><i class="c5">商品消费</i><i class="c6">现金结算</i><i class="c7">6171.84</i><i class="c8">0.00</i><i class="c9"></i><i class="c10">CZ00002</i><i class="c11">2018-03-18 21:05:30</i></div>
<div class="r"><i class="c0"><b class="ck"></b></i><i class="c1">26</i><i class="c2">收入</i><i class="c3">XF20180318120809</i><i class="c4 l">JSDI</i><i class="c5">商品消费</i><i class="c6">现金结算</i><i class="c7">2996.16</i><i class="c8">0.00</i><i class="c9"></i><i class="c10">CZ00002</i><i class="c11">2018-03-18 12:08:34</i></div>
<div class="r"><i class="c0"><b class="ck"></b></i><i class="c1">27</i><i class="c2">收入</i><i class="c3">XF20180317214910</i><i class="c4"></i><i class="c5">商品消费</i><i class="c6">现金结算</i><i class="c7">230.00</i><i class="c8">0.00</i><i class="c9"></i><i class="c10">CZ00002</i><i class="c11">2018-03-17 21:49:20</i></div>
<div class="r"><i class="c0"><b class="ck"></b></i><i class="c1">28</i><i class="c2">收入</i><i class="c3">XJ20180313145724</i><i class="c4">电子配件</i><i class="c5">现金收支</i><i class="c6">现金结算</i><i class="c7">98.00</i><i class="c8">0.00</i><i class="c9"></i><i class="c10">CZ00002</i><i class="c11">2018-03-13 14:57:49</i></div>
<div class="r"><i class="c0"><b class="ck"></b></i><i class="c1">29</i><i class="c2">收入</i><i class="c3">XF20180313092814</i><i class="c4"></i><i class="c5">商品消费</i><i class="c6">现金结算</i><i class="c7">4657.00</i><i class="c8">0.00</i><i class="c9"></i><i class="c10">CZ00002</i><i class="c11">2018-03-13 12:33:49</i></div>
<div class="r"><i class="c0"><b class="ck"></b></i><i class="c1">30</i><i class="c2">收入</i><i class="c3">XF20180313085504</i><i class="c4"></i><i class="c5">商品消费</i><i class="c6">现金结算</i><i class="c7">0.00</i><i class="c8">0.00</i><i class="c9"></i><i class="c10">CZ00002</i><i class="c11">2018-03-13 09:02:49</i></div>

<div class="a" style="left:0;top:510px;width:1532px;height:60px;background:repeating-linear-gradient(#fff 0,#fff 16px,#ececec 16px,#ececec 17px)"></div>
<i class="a" style="left:19px;top:510px;width:1px;height:60px;background:#ececec"></i>
<i class="a" style="left:55px;top:510px;width:1px;height:60px;background:#ececec"></i>
<i class="a" style="left:105px;top:510px;width:1px;height:60px;background:#ececec"></i>
<i class="a" style="left:223px;top:510px;width:1px;height:60px;background:#ececec"></i>
<i class="a" style="left:381px;top:510px;width:1px;height:60px;background:#ececec"></i>
<i class="a" style="left:469px;top:510px;width:1px;height:60px;background:#ececec"></i>
<i class="a" style="left:537px;top:510px;width:1px;height:60px;background:#ececec"></i>
<i class="a" style="left:605px;top:510px;width:1px;height:60px;background:#ececec"></i>
<i class="a" style="left:673px;top:510px;width:1px;height:60px;background:#ececec"></i>
<i class="a" style="left:1313px;top:510px;width:1px;height:60px;background:#ececec"></i>
<i class="a" style="left:1401px;top:510px;width:1px;height:60px;background:#ececec"></i>
<i class="a" style="left:1529px;top:510px;width:1px;height:60px;background:#ececec"></i>
</div>
</div>
<!-- status row -->
<div class="a" style="left:96px;top:812px;width:1533px;height:22px;background:#d9e4ef;border-top:1px solid #e8eef5;box-sizing:border-box">
<span class="a t12" style="left:6px;top:5px">系统提示：当前共有 <b class="n">64</b> 条流水记录，合计：<b class="n">3</b> 页，每页<b class="n">30</b> 条。</span>
<span class="a t12" style="left:1149px;top:6px">首页</span>
<span class="a t12" style="left:1193px;top:6px">上一页</span>
<span class="a t12" style="left:1243px;top:6px">下一页</span>
<span class="a t12" style="left:1299px;top:6px">尾页</span>
<span class="a t12" style="left:1350px;top:6px">每页</span>
<div class="a" style="left:1377px;top:0;width:35px;height:20px;background:#fff"><span class="a t12" style="left:10px;top:3px">30</span></div>
<span class="a t12" style="left:1418px;top:6px">条</span>
<div class="a" style="left:1439px;top:0;width:35px;height:20px;background:#fff"><span class="a t12" style="left:14px;top:3px">1</span></div>
<svg class="a" style="left:1482px;top:2px" width="15" height="16" viewBox="0 0 16 17"><use href="#magi"/></svg><span class="a t12" style="left:1500px;top:6px">查询</span>
</div>
<!-- bottom bar -->
<div class="a" style="left:93px;top:837px;width:1540px;height:2px;background:#e6edf4"></div>
<div class="a" style="left:93px;top:839px;width:1540px;height:30px;background:linear-gradient(#fff 0,#fdfdfd 35%,#ebebeb 72%,#dbdbdb 100%)">
<svg class="a" style="left:15px;top:6px" width="16" height="16" viewBox="0 0 16 16"><rect width="16" height="16" fill="#fff"/>
<path d="M7 7.600c0-1.600 1.700-2.400 3.900-2.400s3.900.8 3.900 2.400v2.200H7z" fill="#5cb85c" stroke="#3d8f3d" stroke-width=".6"/><circle cx="10.900" cy="3.400" r="2.700" fill="#f6cfa6"/><path d="M8.100 3.300c0-1.900 1.300-3 2.800-3s2.800 1.100 2.800 3c-1.200-1.300-4.400-1.300-5.600 0z" fill="#e7a533"/>
<path d="M.9 13.600c0-1.900 1.900-2.800 4.400-2.800s4.400.9 4.400 2.800V15.600H.9z" fill="#3b8de6" stroke="#2a68b8" stroke-width=".6"/><circle cx="5.300" cy="8.300" r="2.900" fill="#f6cfa6"/><path d="M2.300 8.200c0-2 1.400-3.200 3-3.200s3 1.200 3 3.200c-1.300-1.400-4.700-1.400-6 0z" fill="#9a5b3c"/>
<ellipse cx="1" cy="14" rx="1" ry="1.300" fill="#e79a55"/><ellipse cx="9.700" cy="14" rx="1" ry="1.300" fill="#e79a55"/></svg>
<svg class="a" style="left:54px;top:6px" width="16" height="16" viewBox="0 0 16 16"><use href="#refi"/></svg>
<svg class="a" style="left:94px;top:6px" width="14" height="16" viewBox="0 0 14 16"><rect x="1.500" y="1.500" width="11" height="13" fill="#f1f1f1" stroke="#8e8e8e" stroke-width=".9"/><rect x="3" y="3" width="8" height="3" fill="#4a7fd0"/><g fill="#8e8e8e"><rect x="3" y="7.500" width="2" height="1.300"/><rect x="6" y="7.500" width="2" height="1.300"/><rect x="9" y="7.500" width="2" height="1.300" fill="#e23d3f"/><rect x="3" y="9.800" width="2" height="1.300"/><rect x="6" y="9.800" width="2" height="1.300"/><rect x="9" y="9.800" width="2" height="1.300"/><rect x="3" y="12.100" width="2" height="1.300"/><rect x="6" y="12.100" width="2" height="1.300"/><rect x="9" y="12.100" width="2" height="1.300"/></g></svg>
<svg class="a" style="left:127px;top:6px" width="14" height="16" viewBox="0 0 14 16"><path d="M7 .8L11 5H8.500V7.200C11.400 8 13 9.800 13 12.500V15H10.200V12.600C10.200 11.300 9.300 10.300 7 10.100 4.700 10.300 3.800 11.300 3.800 12.600V15H1V12.500C1 9.800 2.600 8 5.500 7.200V5H3z" fill="#46a846" stroke="#2a7a2a" stroke-width=".8" stroke-linejoin="round"/></svg>

<span class="a t12" style="left:1208px;top:10px">欢迎使用宏越系列软件，服务热线： <b class="n">0773-2667558</b></span>
</div>
</div>
</div>
</body>
</html>
